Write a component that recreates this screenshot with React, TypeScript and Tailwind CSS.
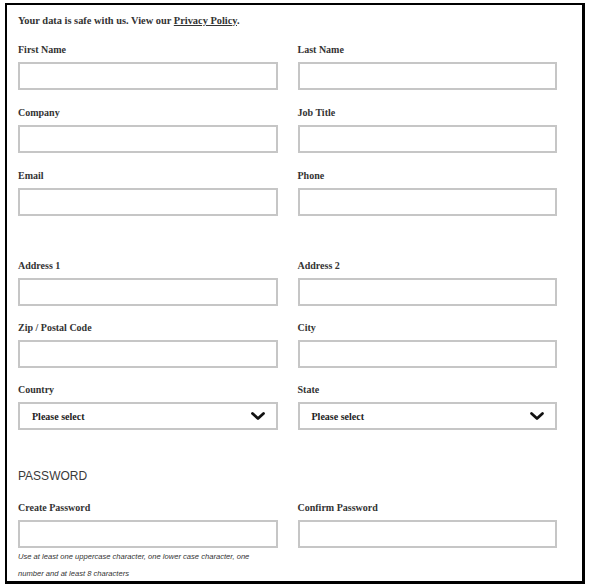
import React from 'react';

const serif = "font-['Liberation_Serif',serif]";

const Field: React.FC<{ label: string }> = ({ label }) => (
  <div>
    <div className={`h-[14px] leading-[14px] mb-[5px] text-[10px] font-bold text-[#333] ${serif}`}>{label}</div>
    <div className="h-[28px] border-2 border-[#c6c6c6] bg-white" />
  </div>
);

const SelectField: React.FC<{ label: string }> = ({ label }) => (
  <div>
    <div className={`h-[14px] leading-[14px] mb-[5px] text-[10px] font-bold text-[#333] ${serif}`}>{label}</div>
    <div className="h-[28px] border-2 border-[#c6c6c6] bg-white flex items-center justify-between pl-[12px] pr-[10px]">
      <span className={`text-[10px] font-bold text-[#222] ${serif}`}>Please select</span>
      <svg width="16" height="10" viewBox="0 0 16 10" fill="none">
        <polyline points="2.5,2.5 8,7.5 13.5,2.5" stroke="#111" strokeWidth="2.8" strokeLinecap="round" strokeLinejoin="round" />
      </svg>
    </div>
  </div>
);

export default function App() {
  return (
    <div className="pt-[3px] pl-[5px] bg-white">
      <div className="w-[580px] h-[581px] border-2 border-r-[3px] border-b-[3px] border-black pl-[11px] pr-[25px] pt-[9px] overflow-hidden">
        <p className={`h-[14px] leading-[14px] mb-[15px] text-[10.4px] font-bold text-[#333] ${serif}`}>
          Your data is safe with us. View our <span className="underline">Privacy Policy</span>.
        </p>

        <div className="grid grid-cols-2 gap-x-5 gap-y-[16px]">
          <Field label="First Name" />
          <Field label="Last Name" />
          <Field label="Company" />
          <Field label="Job Title" />
          <Field label="Email" />
          <Field label="Phone" />
        </div>

        <div className="grid grid-cols-2 gap-x-5 gap-y-[15px] mt-[43px]">
          <Field label="Address 1" />
          <Field label="Address 2" />
          <Field label="Zip / Postal Code" />
          <Field label="City" />
          <SelectField label="Country" />
          <SelectField label="State" />
        </div>

        <h2 className="mt-[38px] h-[16px] leading-[16px] text-[12px] text-[#3a3a3a] font-['Liberation_Sans',sans-serif] uppercase">
          Password
        </h2>

        <div className="grid grid-cols-2 gap-x-5 mt-[17px]">
          <div>
            <Field label="Create Password" />
            <p className="text-[7.6px] leading-[17px] italic text-[#333] font-['Liberation_Sans',sans-serif]">
              Use at least one uppercase character, one lower case character, one
              <br />
              number and at least 8 characters
            </p>
          </div>
          <Field label="Confirm Password" />
        </div>
      </div>
    </div>
  );
}
